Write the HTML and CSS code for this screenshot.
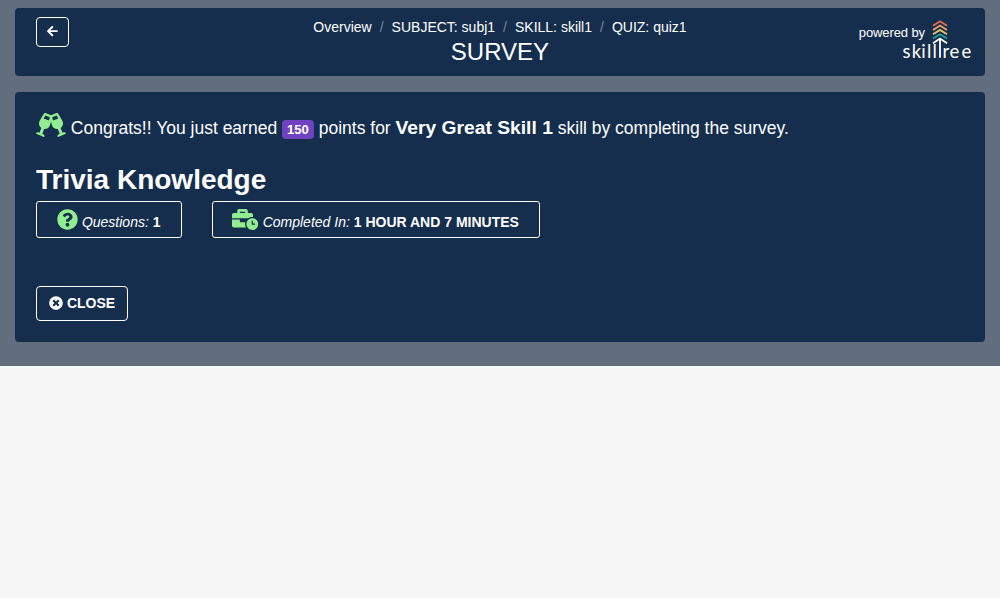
FILE: index.html
```html
<!DOCTYPE html>
<html lang="en">
<head>
<meta charset="utf-8">
<title>Survey</title>
<link rel="stylesheet" href="styles.css">
</head>
<body>
<div class="page">
  <header class="tile header">
    <div class="header-side">
      <button class="btn back" aria-label="Back"><svg class="icon-back" viewBox="0 0 448 512"><path d="M257.5 445.1l-22.2 22.2c-9.4 9.4-24.6 9.4-33.9 0L7 273c-9.4-9.4-9.4-24.6 0-33.9L201.4 44.7c9.4-9.4 24.6-9.4 33.9 0l22.2 22.2c9.5 9.5 9.3 25-.4 34.3L136.6 216H424c13.3 0 24 10.7 24 24v32c0 13.3-10.7 24-24 24H136.6l120.5 114.8c9.8 9.3 10 24.8.4 34.3z"/></svg></button>
    </div>
    <div class="header-main">
      <nav class="crumbs"><a>Overview</a><i class="sep">/</i><a>SUBJECT: subj1</a><i class="sep">/</i><a>SKILL: skill1</a><i class="sep">/</i><a>QUIZ: quiz1</a></nav>
      <h1 class="page-title">SURVEY</h1>
    </div>
    <div class="header-side brand">
      <span class="powered">powered by</span>
      <svg class="logo" viewBox="0 0 72 46">
        <g class="chevrons">
          <path stroke="#e76f51" d="M31 6.7L38 2.3L45 6.7"/>
          <path stroke="#f4a261" d="M31 11L38 6.6L45 11"/>
          <path stroke="#e9c46a" d="M31 15.3L38 10.9L45 15.3"/>
          <path stroke="#2a9d8f" d="M31 19.6L38 15.2L45 19.6"/>
          <path stroke="#fff" d="M31 24.2L38 19.6L45 24.2M38 19.6V38.8"/>
        </g>
        <text class="logo-text" x="0.5 9.8 19.2 25 30.6" y="38.6">skill</text>
        <text class="logo-text" x="40.6 47.6 59.6" y="38.6">ree</text>
      </svg>
    </div>
  </header>
  <main class="tile result">
    <p class="congrats"><svg class="icon-cheers" viewBox="0 0 640 512"><path d="M639.4 433.6c-8.4-20.4-31.8-30.1-52.2-21.6l-22.1 9.2-38.7-101.9c47.9-35 64.8-100.3 34.5-152.8L474.3 16c-8-13.9-25.1-19.7-40-13.6L320 49.8 205.7 2.4c-14.9-6.2-32-.3-40 13.6L79.1 166.5C48.9 219 65.7 284.3 113.6 319.2L74.9 421.1l-22.1-9.2c-20.4-8.5-43.7 1.2-52.2 21.6-1.7 4.1.2 8.8 4.3 10.5l162.3 67.4c4.1 1.7 8.7-.2 10.4-4.3 8.4-20.4-1.2-43.8-21.6-52.3l-22.1-9.2L173.3 342c4.4.5 8.8 1.3 13.1 1.3 51.7 0 99.4-33.1 113.4-85.3l20.2-75.4 20.2 75.4c14 52.2 61.7 85.3 113.4 85.3 4.3 0 8.7-.8 13.1-1.3L506 445.6l-22.1 9.2c-20.4 8.5-30.1 31.9-21.6 52.3 1.7 4.1 6.4 6 10.4 4.3L635.1 444c4.1-1.7 6-6.3 4.3-10.4zM275.9 162.1l-112.1-46.5 36.5-63.4 94.5 39.2-18.9 70.7zm88.2 0l-18.9-70.7 94.5-39.2 36.5 63.4-112.1 46.5z"/></svg> Congrats!! You just earned <span class="badge">150</span> points for <strong class="skill">Very Great Skill 1</strong> skill by completing the survey.</p>
    <h2 class="quiz-name">Trivia Knowledge</h2>
    <div class="stats">
      <div class="stat"><svg class="icon-stat" viewBox="0 0 512 512"><path d="M504 256c0 136.997-111.043 248-248 248S8 392.997 8 256C8 119.083 119.043 8 256 8s248 111.083 248 248zM262.655 90c-54.497 0-89.255 22.957-116.549 63.758-3.536 5.286-2.353 12.415 2.715 16.258l34.699 26.31c5.205 3.947 12.621 3.008 16.665-2.122 17.864-22.658 30.113-35.797 57.303-35.797 20.429 0 45.698 13.148 45.698 32.958 0 14.976-12.363 22.667-32.534 33.976C247.128 238.528 216 254.941 216 296v4c0 6.627 5.373 12 12 12h56c6.627 0 12-5.373 12-12v-1.333c0-28.462 83.186-29.647 83.186-106.667 0-58.002-60.165-102-116.531-102zM256 338c-25.365 0-46 20.635-46 46 0 25.364 20.635 46 46 46s46-20.636 46-46c0-25.364-20.635-46-46-46z"/></svg> <em>Questions:</em> <strong>1</strong></div>
      <div class="stat"><svg class="icon-stat wide" viewBox="0 0 640 512"><path d="M496 224c-79.59 0-144 64.41-144 144s64.41 144 144 144 144-64.41 144-144-64.41-144-144-144zm64 150.29c0 5.34-4.37 9.71-9.71 9.71h-60.57c-5.34 0-9.71-4.37-9.71-9.71v-76.57c0-5.34 4.37-9.71 9.71-9.71h12.57c5.34 0 9.71 4.37 9.71 9.71V352h38.29c5.34 0 9.71 4.37 9.71 9.71v12.58zM496 192c5.4 0 10.72.33 16 .81V144c0-25.6-22.4-48-48-48h-80V48c0-25.6-22.4-48-48-48H176c-25.6 0-48 22.4-48 48v48H48c-25.6 0-48 22.4-48 48v80h395.12c28.6-20.09 63.35-32 100.88-32zM320 96H192V64h128v32zm6.82 224H208c-8.84 0-16-7.16-16-16v-48H0v144c0 25.6 22.4 48 48 48h291.43C327.1 423.96 320 396.82 320 368c0-16.66 2.48-32.72 6.82-48z"/></svg> <em>Completed In:</em> <strong>1 HOUR AND 7 MINUTES</strong></div>
    </div>
    <button class="btn close"><svg class="icon-close" viewBox="0 0 512 512"><path d="M256 8C119 8 8 119 8 256s111 248 248 248 248-111 248-248S393 8 256 8zm121.6 313.1c4.7 4.7 4.7 12.3 0 17L338 377.6c-4.7 4.7-12.3 4.7-17 0L256 312l-65.1 65.6c-4.7 4.7-12.3 4.7-17 0L134.4 338c-4.7-4.7-4.7-12.3 0-17l65.6-65-65.6-65.1c-4.7-4.7-4.7-12.3 0-17l39.6-39.6c4.7-4.7 12.3-4.7 17 0l65 65.7 65.1-65.6c4.7-4.7 12.3-4.7 17 0l39.6 39.6c4.7 4.7 4.7 12.3 0 17L312 256l65.6 65.1z"/></svg>CLOSE</button>
  </main>
</div>
</body>
</html>
```
FILE: styles.css
```css
* { box-sizing: border-box; }
body {
  margin: 0;
  background: #f7f7f7;
  color: #fff;
  font: 14px/21px "Liberation Sans", Arial, sans-serif;
}
svg { fill: currentColor; }
.page {
  display: flex;
  flex-direction: column;
  gap: 16px;
  padding: 8px 15px 24px;
  background: #626d7d;
}
.tile { background: #152e4d; border-radius: 4px; }
.btn {
  display: flex;
  align-items: center;
  justify-content: center;
  padding: 0;
  border: 1px solid #fff;
  border-radius: 4px;
  background: transparent;
  color: #fff;
  font: bold 14px/21px "Liberation Sans", Arial, sans-serif;
}

.header {
  display: grid;
  grid-template-columns: 160px 1fr 160px;
  height: 68px;
  padding: 9px 11px 0 21px;
}
.back { width: 33px; height: 30px; padding-bottom: 2px; }
.icon-back { width: 10.7px; height: 12.25px; }
.header-main { padding-right: 10px; text-align: center; }
.crumbs { display: flex; justify-content: center; }
.sep { padding: 0 8px; color: #7c8795; font-style: normal; }
.page-title { margin: 0; font-size: 24px; font-weight: 400; line-height: 27px; }
.brand { display: flex; justify-content: flex-end; align-items: flex-start; }
.powered { margin: 5px -23px 0 0; font-size: 13px; line-height: 21px; letter-spacing: -0.1px; white-space: nowrap; }
.logo { width: 72px; height: 46px; margin-top: 2px; flex: none; overflow: visible; }
.chevrons { fill: none; stroke-width: 1.8; }
.logo-text { font: 18.5px Lato, sans-serif; fill: #fff; }

.result { height: 250px; padding: 21px 21px 0; }
.congrats { margin: 0; height: 30px; font-size: 17.5px; line-height: 30px; }
.icon-cheers { width: 30px; height: 24px; color: #90ee90; vertical-align: -3px; }
.badge {
  display: inline-block;
  padding: 3px 5px;
  border-radius: 4px;
  background: #6f42c1;
  font-size: 13.1px;
  font-weight: bold;
  line-height: 13px;
  vertical-align: baseline;
}
.skill { font-size: 19.25px; }
.quiz-name { margin: 20px 0 4px; font-size: 28px; line-height: 34px; }
.stats { display: flex; gap: 30px; }
.stat { height: 37px; padding: 6px 20px 0; border: 1px solid #fff; border-radius: 3px; line-height: 28px; white-space: nowrap; }
.icon-stat { width: 21px; height: 21px; color: #90ee90; vertical-align: -3px; }
.wide { width: 26.25px; }
.stat .wide { margin: 0 0.5px 0 -0.5px; }
.close { width: 92px; height: 35px; margin-top: 48px; gap: 4px; }
.icon-close { width: 14px; height: 14px; margin-bottom: 1px; }
```
